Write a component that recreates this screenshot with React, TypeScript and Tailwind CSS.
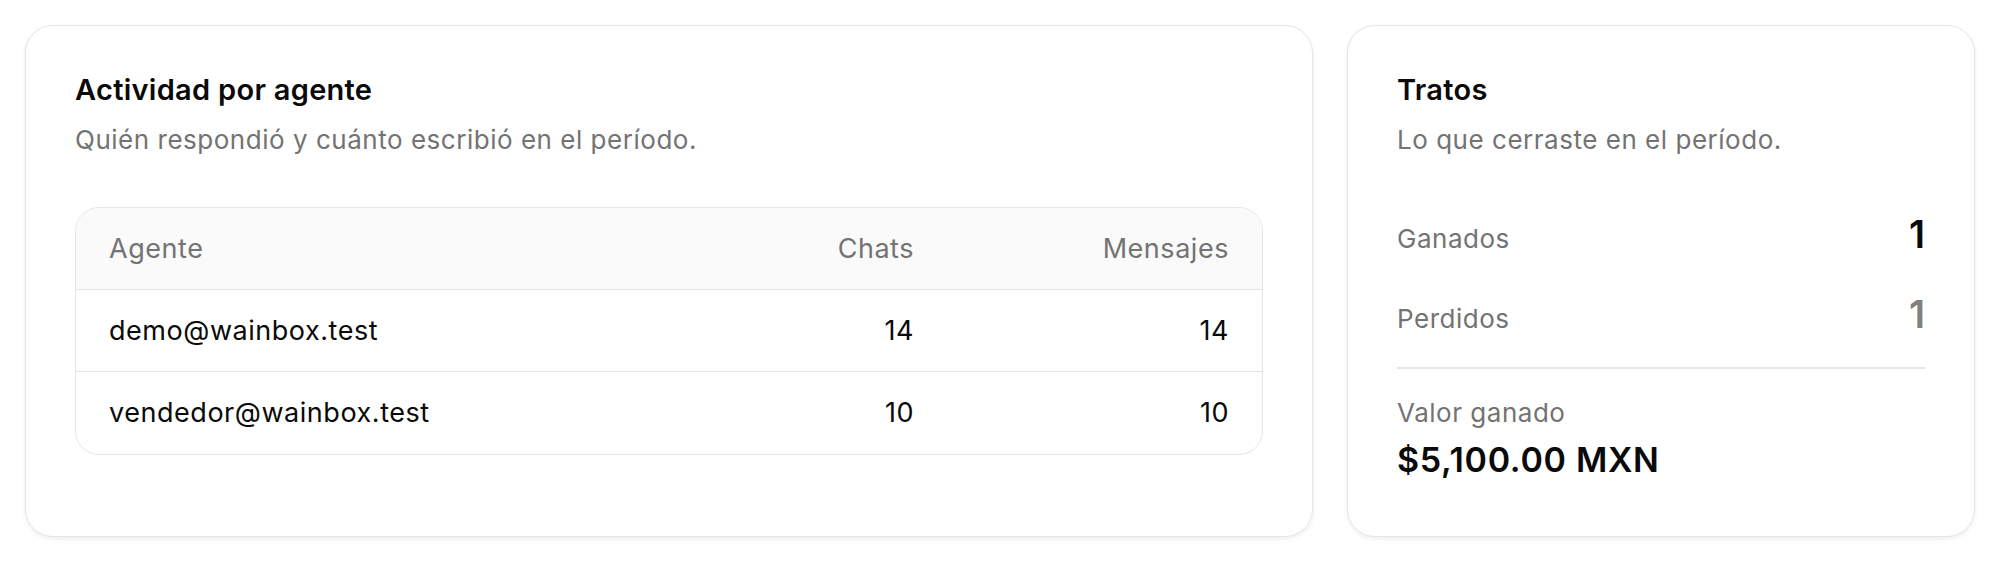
import React from "react";

const rows = [
  { agent: "demo@wainbox.test", chats: 14, msgs: 14 },
  { agent: "vendedor@wainbox.test", chats: 10, msgs: 10 },
];

export default function App() {
  return (
    <div
      className="w-full bg-white p-[25px] grid grid-cols-[minmax(0,1fr)_628px] gap-[34px] text-[#0a0a0a]"
      style={{ fontFamily: "Inter, 'Noto Sans', 'Liberation Sans', sans-serif" }}
    >
      {/* Left card */}
      <div className="rounded-[28px] border border-[#e5e5e5] bg-white shadow-[0_2px_5px_rgba(0,0,0,0.07)] px-[49px] pt-[46px] pb-[49px]">
        <h2 className="text-[29px] leading-[36px] font-semibold tracking-[0.01em]">Actividad por agente</h2>
        <p className="mt-[14px] text-[26px] leading-[36px] tracking-[0.02em] text-[#737373]">
          Quién respondió y cuánto escribió en el período.
        </p>
        <div className="mt-[49px] rounded-[24px] border border-[#e5e5e5] overflow-hidden">
          <div className="grid grid-cols-[minmax(0,1fr)_250px_315px] h-[82px] items-center bg-[#fafafa] border-b border-[#e5e5e5] text-[27px] leading-[36px] tracking-[0.02em] text-[#737373]">
            <div className="px-[33px]">Agente</div>
            <div className="px-[33px] text-right">Chats</div>
            <div className="px-[33px] text-right">Mensajes</div>
          </div>
          {rows.map((r, i) => (
            <div
              key={r.agent}
              className={`grid grid-cols-[minmax(0,1fr)_250px_315px] h-[82px] items-center text-[27px] leading-[36px] tracking-[0.02em] ${
                i < rows.length - 1 ? "border-b border-[#e5e5e5]" : ""
              }`}
            >
              <div className="px-[33px]">{r.agent}</div>
              <div className="px-[33px] text-right">{r.chats}</div>
              <div className="px-[33px] text-right">{r.msgs}</div>
            </div>
          ))}
        </div>
      </div>

      {/* Right card */}
      <div className="rounded-[28px] border border-[#e5e5e5] bg-white shadow-[0_2px_5px_rgba(0,0,0,0.07)] px-[49px] pt-[46px] pb-[56px]">
        <h2 className="text-[29px] leading-[36px] font-semibold tracking-[0.01em]">Tratos</h2>
        <p className="mt-[14px] text-[26px] leading-[36px] tracking-[0.02em] text-[#737373]">
          Lo que cerraste en el período.
        </p>
        <div className="mt-[54px] flex items-baseline justify-between h-[44px]">
          <span className="text-[26px] leading-[36px] tracking-[0.02em] text-[#737373]">Ganados</span>
          <span className="text-[38px] leading-[44px] font-semibold">1</span>
        </div>
        <div className="mt-[36px] flex items-baseline justify-between h-[44px]">
          <span className="text-[26px] leading-[36px] tracking-[0.02em] text-[#737373]">Perdidos</span>
          <span className="text-[38px] leading-[44px] font-semibold text-[#808080]">1</span>
        </div>
        <div className="mt-[31px] border-t-2 border-[#e5e5e5] pt-[26px]">
          <div className="text-[26px] leading-[36px] tracking-[0.02em] text-[#737373]">Valor ganado</div>
          <div className="mt-[9px] text-[34px] leading-[40px] font-semibold tracking-[0.02em]">$5,100.00 MXN</div>
        </div>
      </div>
    </div>
  );
}
